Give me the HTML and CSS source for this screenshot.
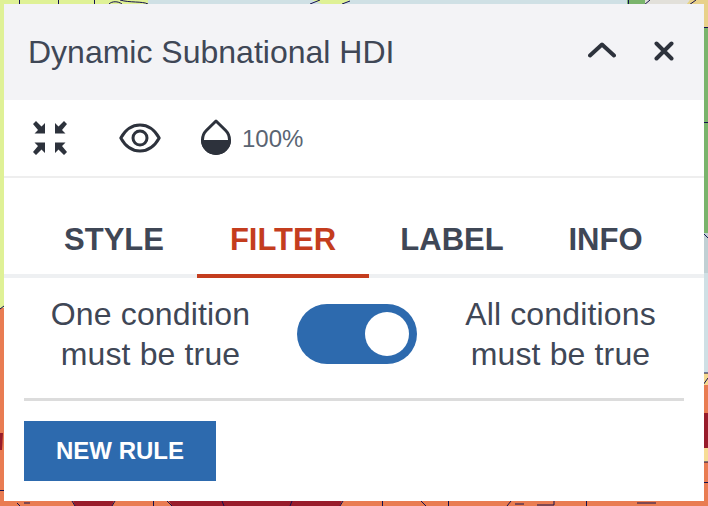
FILE: index.html
```html
<!DOCTYPE html>
<html lang="en">
<head>
<meta charset="utf-8">
<title>Dynamic Subnational HDI</title>
<link rel="stylesheet" href="styles.css">
</head>
<body>
<svg class="map" viewBox="0 0 708 506" width="708" height="506" aria-hidden="true">
  <rect width="708" height="506" fill="#e97c52"/>
  <rect width="708" height="308" fill="#dff196"/>
  <path d="M148 0H312L322 4H342L350 0H627V8H148Z" fill="#cfe0e5"/>
  <path d="M627 0H645V8H627Z" fill="#7ab46c"/>
  <path d="M645 0H690L684 8H645Z" fill="#e2e0da"/>
  <path d="M690 0H708V28H696V8H684Z" fill="#e8d18a"/>
  <rect x="700" y="28" width="8" height="205" fill="#7ab46c"/>
  <rect x="700" y="233" width="8" height="40" fill="#c0d0d4"/>
  <rect x="700" y="273" width="8" height="102" fill="#cfe0e5"/>
  <rect x="700" y="373" width="8" height="12" fill="#f3d98f"/>
  <rect x="700" y="413" width="8" height="35" fill="#981c2b"/>
  <rect x="700" y="448" width="8" height="14" fill="#f7dd96"/>
  <path d="M0 433H3L2 450H0Z" fill="#981c2b"/>
  <path d="M72 498H115L112 506H75Z" fill="#981c2b"/>
  <path d="M167 498H343L340 506H172Z" fill="#981c2b"/>
  <g fill="none" stroke="#14124f" stroke-width="1">
    <path d="M19.500 0V4M58.500 0V4M94.500 0V4M109 4C112 1 118 1 122 4M148 4C142 1 130 3 120 0M310 4L320 0M342 4L350 1"/>
    <path d="M628.500 0V5M644 5L650 0M689 5L696 0M703 27.500H708M703 122.500H708M703 233L708 238M703 482.500H708"/>
    <path d="M0 309L4 306M703 373H708M703 385L708 378M703 448V462H708M703 413V448M0 490.500H4"/>
    <path d="M17 503L20 506M24 503H30M72 501L75 506M115 501L112 506M153.500 501V506M167 501L172 506M222 501L224 506M292 501L290 506M343 501L340 506M382.500 501V506M421 501L426 506M448.500 501V506M507 506L511 501M515 504H524M537 505H554V501M586.500 501V506M637 503H656"/>
  </g>
</svg>
<main class="panel">
  <header class="panel-head">
    <h1 class="panel-title">Dynamic Subnational HDI</h1>
    <div class="head-actions">
      <svg class="ico-chevron" viewBox="0 0 28 16" width="28" height="16" aria-hidden="true"><path d="M2 13.500L14 2.500L26 13.500" fill="none" stroke="#2d323c" stroke-width="4" stroke-linecap="round" stroke-linejoin="round"/></svg>
      <svg class="ico-close" viewBox="0 0 20 20" width="20" height="20" aria-hidden="true"><path d="M2.500 2.500L17.500 17.500M17.500 2.500L2.500 17.500" fill="none" stroke="#2d323c" stroke-width="4" stroke-linecap="round"/></svg>
    </div>
  </header>
  <div class="toolbar">
    <svg class="ico-compress" viewBox="0 0 34 34" width="34" height="34" aria-hidden="true">
      <g fill="#2d323c">
        <path d="M0 3L3 0L8.500 5.500L12 2V12.500H1.500L5 9Z"/>
        <path d="M34 3L31 0L25.500 5.500L22 2V12.500H32.500L29 9Z"/>
        <path d="M0 31L3 34L8.500 28.500L12 32V21.500H1.500L5 25Z"/>
        <path d="M34 31L31 34L25.500 28.500L22 32V21.500H32.500L29 25Z"/>
      </g>
    </svg>
    <svg class="ico-eye" viewBox="0 0 42 30" width="42" height="30" aria-hidden="true">
      <path d="M1.800 15C6.500 6.500 13 2 21 2S35.500 6.500 40.200 15C35.500 23.500 29 28 21 28S6.500 23.500 1.800 15Z" fill="none" stroke="#2d323c" stroke-width="3" stroke-linejoin="round"/>
      <circle cx="21" cy="15" r="7" fill="none" stroke="#2d323c" stroke-width="3"/>
    </svg>
    <svg class="ico-drop" viewBox="0 0 30 37" width="30" height="37" aria-hidden="true">
      <path d="M15 2L5.300 11.500A13.500 13.500 0 1 0 24.700 11.500Z" fill="none" stroke="#2d323c" stroke-width="3" stroke-linejoin="round"/>
      <path d="M0 21H30A15 15 0 0 1 0 21Z" fill="#2d323c"/>
    </svg>
    <span class="opacity">100%</span>
  </div>
  <nav class="tabs">
    <a class="tab">STYLE</a>
    <a class="tab tab-active">FILTER</a>
    <a class="tab">LABEL</a>
    <a class="tab">INFO</a>
  </nav>
  <section class="filter">
    <div class="mode">
      <span class="mode-text">One condition<br>must be true</span>
      <span class="toggle"><span class="knob"></span></span>
      <span class="mode-text">All conditions<br>must be true</span>
    </div>
    <button class="new-rule" type="button">NEW RULE</button>
  </section>
</main>
</body>
</html>
```
FILE: styles.css
```css
* { box-sizing: border-box; }
html, body { margin: 0; padding: 0; }
body {
  width: 708px;
  height: 506px;
  padding: 4px;
  overflow: hidden;
  position: relative;
  font-family: "Liberation Sans", Arial, sans-serif;
  color: #3f4756;
}
.map { position: absolute; left: 0; top: 0; display: block; }
.panel {
  position: relative;
  width: 700px;
  height: 497px;
  background: #fff;
  display: flex;
  flex-direction: column;
}
.panel-head {
  height: 96px;
  flex: none;
  background: #f3f3f6;
  display: flex;
  align-items: center;
  justify-content: space-between;
  padding: 0 30px 0 24px;
}
.panel-title {
  margin: 0;
  font-size: 32px;
  font-weight: 400;
  line-height: 36px;
  color: #3f4756;
}
.head-actions { display: flex; align-items: center; gap: 38px; }
.head-actions svg { display: block; }
.ico-chevron { margin-top: -5px; }
.ico-close { margin-top: -2px; }
.toolbar {
  height: 78px;
  flex: none;
  border-bottom: 2px solid #eeeeee;
  display: flex;
  align-items: center;
  padding-left: 29px;
}
.toolbar svg { display: block; flex: none; }
.ico-compress { margin-right: 52px; }
.ico-eye { margin-right: 40px; }
.ico-drop { margin-right: 11px; margin-top: -1px; }
.opacity { font-size: 24px; line-height: 28px; color: #5a6472; margin-top: 2px; }
.tabs {
  height: 100px;
  flex: none;
  display: grid;
  grid-template-columns: 166px 172px 166px 141px;
  padding-left: 27px;
  border-bottom: 4px solid #eef0f2;
}
.tab {
  height: 100px;
  font-size: 31px;
  font-weight: 700;
  line-height: 124px;
  text-align: center;
  color: #3f4756;
  border-bottom: 4px solid transparent;
}
.tab-active { color: #c43d1e; border-bottom-color: #c43d1e; }
.filter {
  flex: 1;
  padding: 16px 20px 0;
  display: flex;
  flex-direction: column;
  align-items: flex-start;
}
.mode {
  width: 660px;
  display: grid;
  grid-template-columns: 253px 120px 247px;
  column-gap: 20px;
  align-items: center;
  padding-bottom: 24px;
  border-bottom: 3px solid #dcdcdc;
}
.mode-text {
  font-size: 32px;
  line-height: 40px;
  letter-spacing: 0.15px;
  text-align: center;
  color: #3f4756;
}
.toggle {
  height: 60px;
  border-radius: 30px;
  background: #2d6aae;
  display: flex;
  align-items: center;
  justify-content: flex-end;
  padding-right: 8px;
}
.knob { width: 44px; height: 44px; border-radius: 50%; background: #fff; }
.new-rule {
  margin-top: 20px;
  width: 192px;
  height: 60px;
  border: 0;
  padding: 0 0 0 0;
  background: #2d6aae;
  color: #fff;
  font-family: inherit;
  font-size: 24px;
  font-weight: 700;
}
```
